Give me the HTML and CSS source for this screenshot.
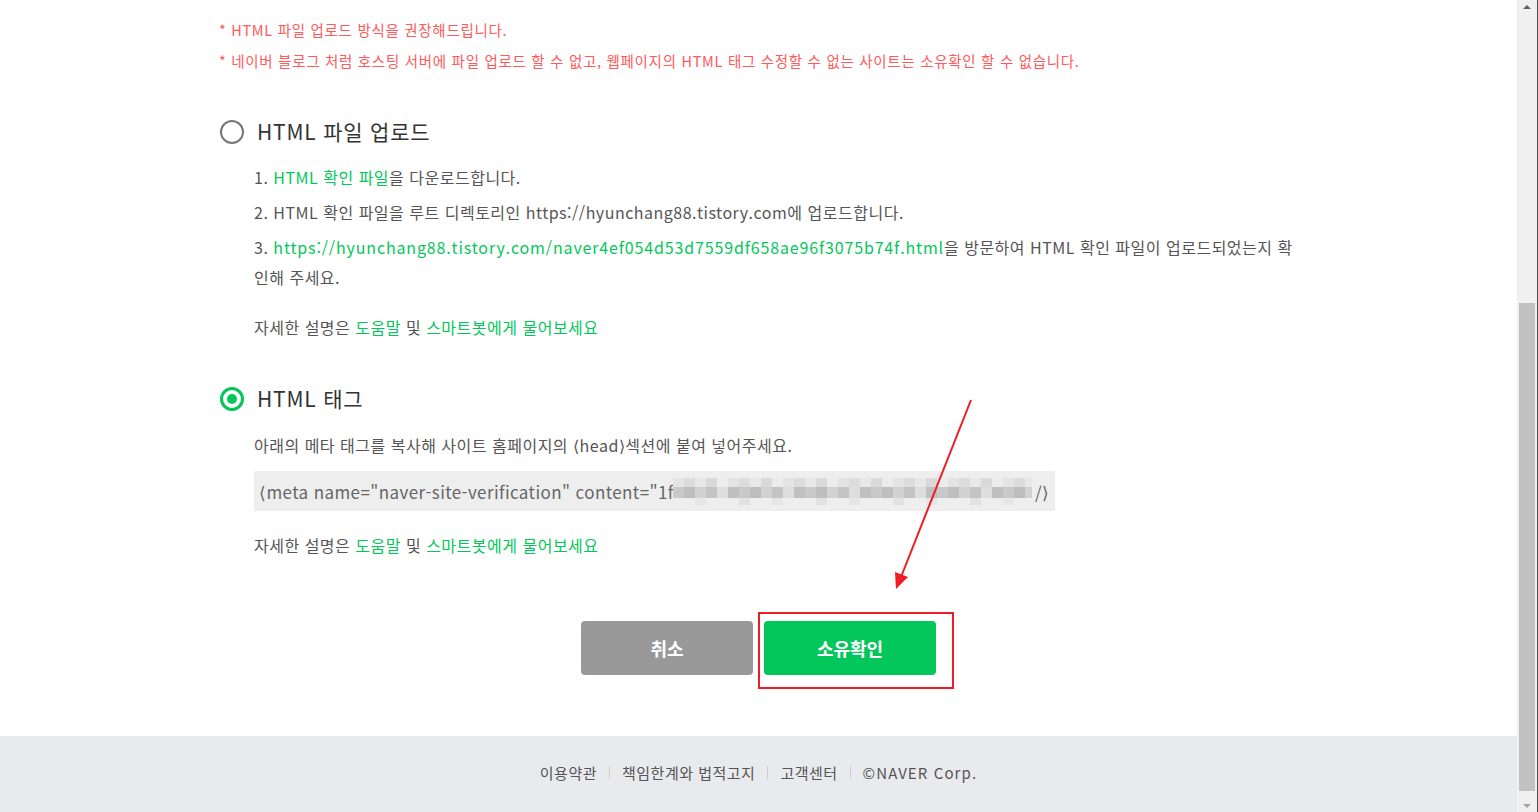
FILE: index.html
```html
<!DOCTYPE html>
<html lang="ko">
<head>
<meta charset="utf-8">
<link rel="stylesheet" href="styles.css">
</head>
<body>
<div class="page">
  <div class="main">
    <div class="content">
      <div class="notes">
        <p class="note">* HTML 파일 업로드 방식을 권장해드립니다.</p>
        <p class="note">* 네이버 블로그 처럼 호스팅 서버에 파일 업로드 할 수 없고, 웹페이지의 HTML 태그 수정할 수 없는 사이트는 소유확인 할 수 없습니다.</p>
      </div>

      <div class="option first">
        <div class="opt-head"><span class="radio"></span><span class="opt-label">HTML 파일 업로드</span></div>
        <ol class="steps">
          <li>1. <span class="green">HTML 확인 파일</span>을 다운로드합니다.</li>
          <li>2. HTML 확인 파일을 루트 디렉토리인 https://hyunchang88.tistory.com에 업로드합니다.</li>
          <li>3. <span class="green url">https://hyunchang88.tistory.com/naver4ef054d53d7559df658ae96f3075b74f.html</span>을 방문하여 HTML 확인 파일이 업로드되었는지 확인해 주세요.</li>
        </ol>
        <p class="help">자세한 설명은 <span class="green">도움말</span> 및 <span class="green">스마트봇에게 물어보세요</span></p>
      </div>

      <div class="option second">
        <div class="opt-head"><span class="radio on"></span><span class="opt-label">HTML 태그</span></div>
        <p class="desc">아래의 메타 태그를 복사해 사이트 홈페이지의 ⟨head⟩섹션에 붙여 넣어주세요.</p>
        <div class="code"><span class="code-text">⟨meta name="naver-site-verification" content="1f</span><span class="blur"><span class="b1"></span><span class="b2"></span><span class="b3"></span></span><span class="code-end">/⟩</span></div>
        <p class="help">자세한 설명은 <span class="green">도움말</span> 및 <span class="green">스마트봇에게 물어보세요</span></p>
      </div>
    </div>

    <div class="buttons">
      <button class="btn cancel">취소</button>
      <button class="btn confirm">소유확인</button>
    </div>

    <footer class="footer">
      <a>이용약관</a><span class="sep"></span><a>책임한계와 법적고지</a><span class="sep"></span><a>고객센터</a><span class="sep"></span><span class="corp">©NAVER Corp.</span>
    </footer>

    <div class="mark-box"></div>
    <svg class="arrow" width="1517" height="812" viewBox="0 0 1517 812">
      <line x1="971" y1="400" x2="901" y2="577" stroke="#ee1c25" stroke-width="2"/>
      <polygon points="896,589 895,572 908,577" fill="#ee1c25"/>
    </svg>
  </div>
  <div class="scrollbar">
    <span class="sb-up"></span>
    <span class="sb-thumb"></span>
    <span class="sb-down"></span>
  </div>
</div>
</body>
</html>
```

FILE: styles.css
```css
* { box-sizing: border-box; }
html, body { margin: 0; padding: 0; }
body {
  font-family: "Noto Sans CJK KR", "Noto Sans", sans-serif;
  background: #fff;
  overflow: hidden;
}
.page {
  display: flex;
  width: 1538px;
  height: 812px;
}
.main {
  position: relative;
  width: 1517px;
  height: 812px;
  display: flex;
  flex-direction: column;
}
.content {
  padding: 14px 0 0 219px;
  display: flex;
  flex-direction: column;
}
p { margin: 0; }
.note {
  color: #ff5a5a;
  font-size: 14.5px;
  line-height: 31px;
  letter-spacing: 0.7px;
}
.option.first { margin-top: 41px; }
.option.second { margin-top: 42px; }
.opt-head {
  display: flex;
  align-items: center;
  height: 30px;
}
.radio {
  width: 24px;
  height: 24px;
  margin-left: 1px;
  border-radius: 50%;
  border: 2px solid #777;
  display: flex;
  align-items: center;
  justify-content: center;
}
.radio.on {
  border: 3px solid #03c75a;
}
.radio.on::after {
  content: "";
  width: 10px;
  height: 10px;
  border-radius: 50%;
  background: #03c75a;
}
.opt-label {
  margin-left: 13px;
  font-size: 21px;
  color: #333;
  letter-spacing: 0.8px;
  margin-top: -2px;
}
.steps {
  list-style: none;
  margin: 15px 0 0 35px;
  padding: 0;
  width: 1044px;
  display: flex;
  flex-direction: column;
  gap: 5px;
}
.steps li {
  word-break: break-all;
}
.steps li, .help, .desc {
  font-size: 16px;
  line-height: 30px;
  color: #555;
  letter-spacing: 0.5px;
}
.green { color: #03c75a; }
.url { letter-spacing: 0.85px; }
.first .help { margin: 20px 0 0 35px; }
.second .desc { margin: 16px 0 0 35px; }
.code {
  margin: 11px 0 0 35px;
  width: 801px;
  height: 40px;
  background: #eee;
  display: flex;
  align-items: center;
  padding-left: 5px;
  font-size: 17px;
  color: #666;
  letter-spacing: 0.4px;
  white-space: nowrap;
}
.code-text { flex: none; width: 414px; overflow: hidden; }
.blur {
  flex: none;
  width: 359px;
  height: 27px;
  display: flex;
  flex-direction: column;
}
.blur .b1 {
  height: 9px;
  background: repeating-linear-gradient(90deg, #e4e4e4 0 11px, #dcdcdc 11px 22px, #e8e8e8 22px 33px, #d9d9d9 33px 44px, #ececec 44px 55px);
}
.blur .b2 {
  height: 11px;
  background: repeating-linear-gradient(90deg, #c9c9c9 0 11px, #bebebe 11px 22px, #d2d2d2 22px 33px, #c4c4c4 33px 44px, #dedede 44px 55px, #c0c0c0 55px 66px);
}
.blur .b3 {
  height: 7px;
  background: repeating-linear-gradient(90deg, #eee 0 22px, #e6e6e6 22px 33px, #eee 33px 66px, #e2e2e2 66px 77px);
}
.code-end { flex: none; margin: 0 0 0 3px; }
.second .help { margin: 19px 0 0 35px; }
.buttons {
  margin-top: 61px;
  display: flex;
  justify-content: center;
  gap: 11px;
}
.btn {
  width: 172px;
  height: 54px;
  border: 0;
  border-radius: 4px;
  color: #fff;
  font-family: inherit;
  font-size: 18px;
  font-weight: 700;
  letter-spacing: 0;
}
.btn.cancel { background: #999; }
.btn.confirm { background: #03c75a; }
.footer {
  margin-top: auto;
  height: 76px;
  background: #e9eaee;
  display: flex;
  align-items: center;
  justify-content: center;
  font-size: 15px;
  color: #555;
  letter-spacing: 0.5px;
  padding-bottom: 3px;
}
.corp { letter-spacing: 1.1px; }
.sep {
  width: 1px;
  height: 13px;
  background: #ccc;
  margin: 0 12px;
}
.mark-box {
  position: absolute;
  left: 758px;
  top: 612px;
  width: 196px;
  height: 77px;
  border: 2px solid #ee1c25;
}
.arrow {
  position: absolute;
  left: 0;
  top: 0;
  pointer-events: none;
}
.scrollbar {
  position: relative;
  width: 21px;
  height: 812px;
  background: #f0f0f0;
  border-right: 1px solid #555;
}
.sb-thumb {
  position: absolute;
  left: 2px;
  width: 16px;
  top: 303px;
  height: 488px;
  background: #c1c1c1;
}
.sb-up, .sb-down {
  position: absolute;
  left: 6px;
  width: 0;
  height: 0;
  border-left: 4px solid transparent;
  border-right: 4px solid transparent;
}
.sb-up { top: 5px; border-bottom: 4px solid #606060; }
.sb-down { bottom: 4px; border-top: 4px solid #a3a3a3; }
```
